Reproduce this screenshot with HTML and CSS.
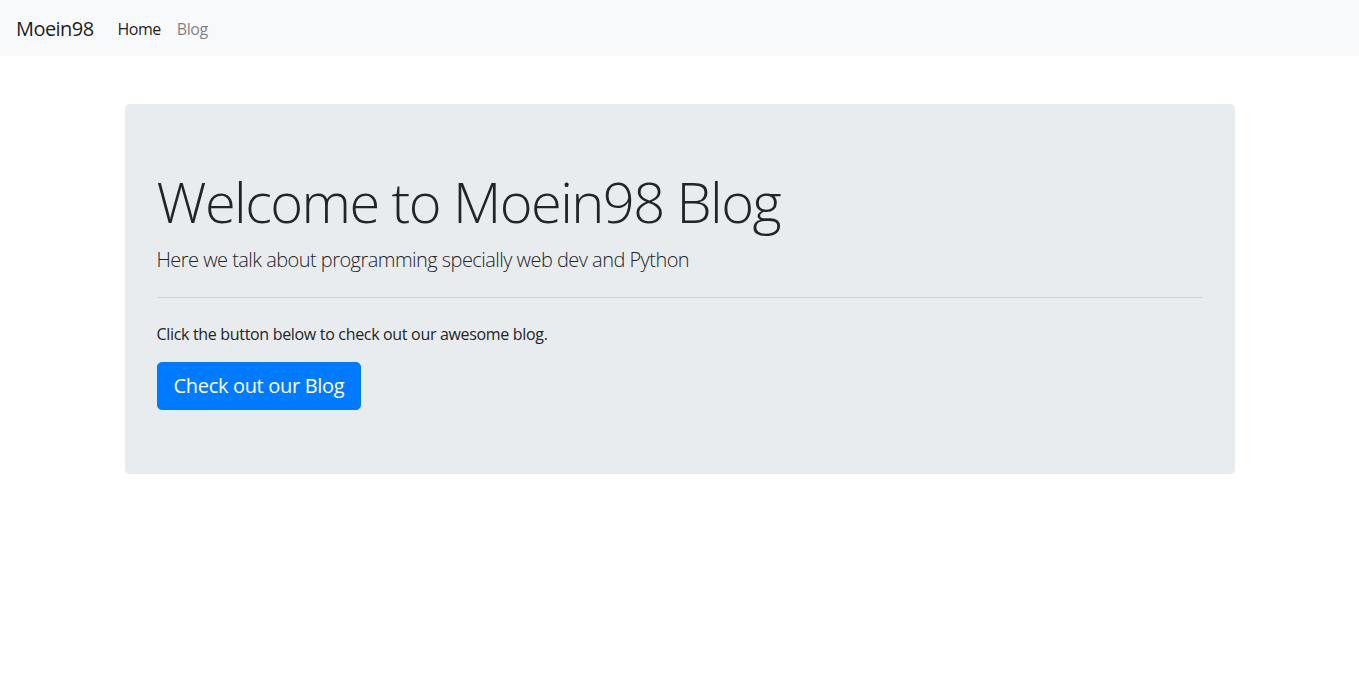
FILE: index.html
```html
<!DOCTYPE html>
<html lang="en">
<head>
<meta charset="utf-8">
<title>Moein98</title>
<link rel="stylesheet" href="styles.css">
</head>
<body>
<nav class="navbar">
  <a class="brand" href="#">Moein98</a>
  <ul class="nav">
    <li><a class="nav-link active" href="#">Home</a></li>
    <li><a class="nav-link" href="#">Blog</a></li>
  </ul>
</nav>
<main class="container">
  <section class="jumbotron">
    <h1 class="display">Welcome to Moein98 Blog</h1>
    <p class="lead">Here we talk about programming specially web dev and Python</p>
    <hr class="divider">
    <p class="text">Click the button below to check out our awesome blog.</p>
    <a class="btn" href="#">Check out our Blog</a>
  </section>
</main>
</body>
</html>
```
FILE: styles.css
```css
* { box-sizing: border-box; }
html, body { margin: 0; }
body {
  font-family: "Open Sans", "Noto Sans", "Liberation Sans", sans-serif;
  font-size: 16px;
  line-height: 1.5;
  letter-spacing: -0.02em;
  color: #212529;
  background: #fff;
}
.navbar {
  display: flex;
  align-items: center;
  height: 56px;
  padding: 9px 16px 7px;
  background: #f8f9fa;
}
.brand {
  font-size: 20px;
  line-height: 30px;
  margin-right: 16px;
  letter-spacing: -0.028em;
  color: rgba(0,0,0,.9);
  text-decoration: none;
}
.nav {
  display: flex;
  list-style: none;
  margin: 0;
  padding: 0;
}
.nav-link {
  display: block;
  padding: 8px;
  letter-spacing: -0.03em;
  color: rgba(0,0,0,.5);
  text-decoration: none;
}
.nav-link.active { color: rgba(0,0,0,.9); }
.container {
  max-width: 1140px;
  margin: 48px auto 0;
  padding: 0 15px;
}
.jumbotron {
  background: #e9ecef;
  border-radius: 4.8px;
  padding: 64px 32px;
  margin-bottom: 32px;
}
.display {
  font-size: 56px;
  font-weight: 300;
  line-height: 1.2;
  letter-spacing: -0.028em;
  margin: 0 0 8px;
}
.lead {
  font-size: 20px;
  font-weight: 300;
  line-height: 30px;
  letter-spacing: -0.027em;
  padding-top: 2px;
  margin: 0;
}
.divider {
  margin: 22px 0 24px;
  border: 0;
  border-top: 1px solid rgba(0,0,0,.1);
}
.text { margin: 0 0 16px; }
.btn {
  display: inline-block;
  font-size: 20px;
  line-height: 30px;
  padding: 8px 16px;
  border: 1px solid #007bff;
  border-radius: 4.8px;
  background: #007bff;
  color: #fff;
  text-decoration: none;
}
```
